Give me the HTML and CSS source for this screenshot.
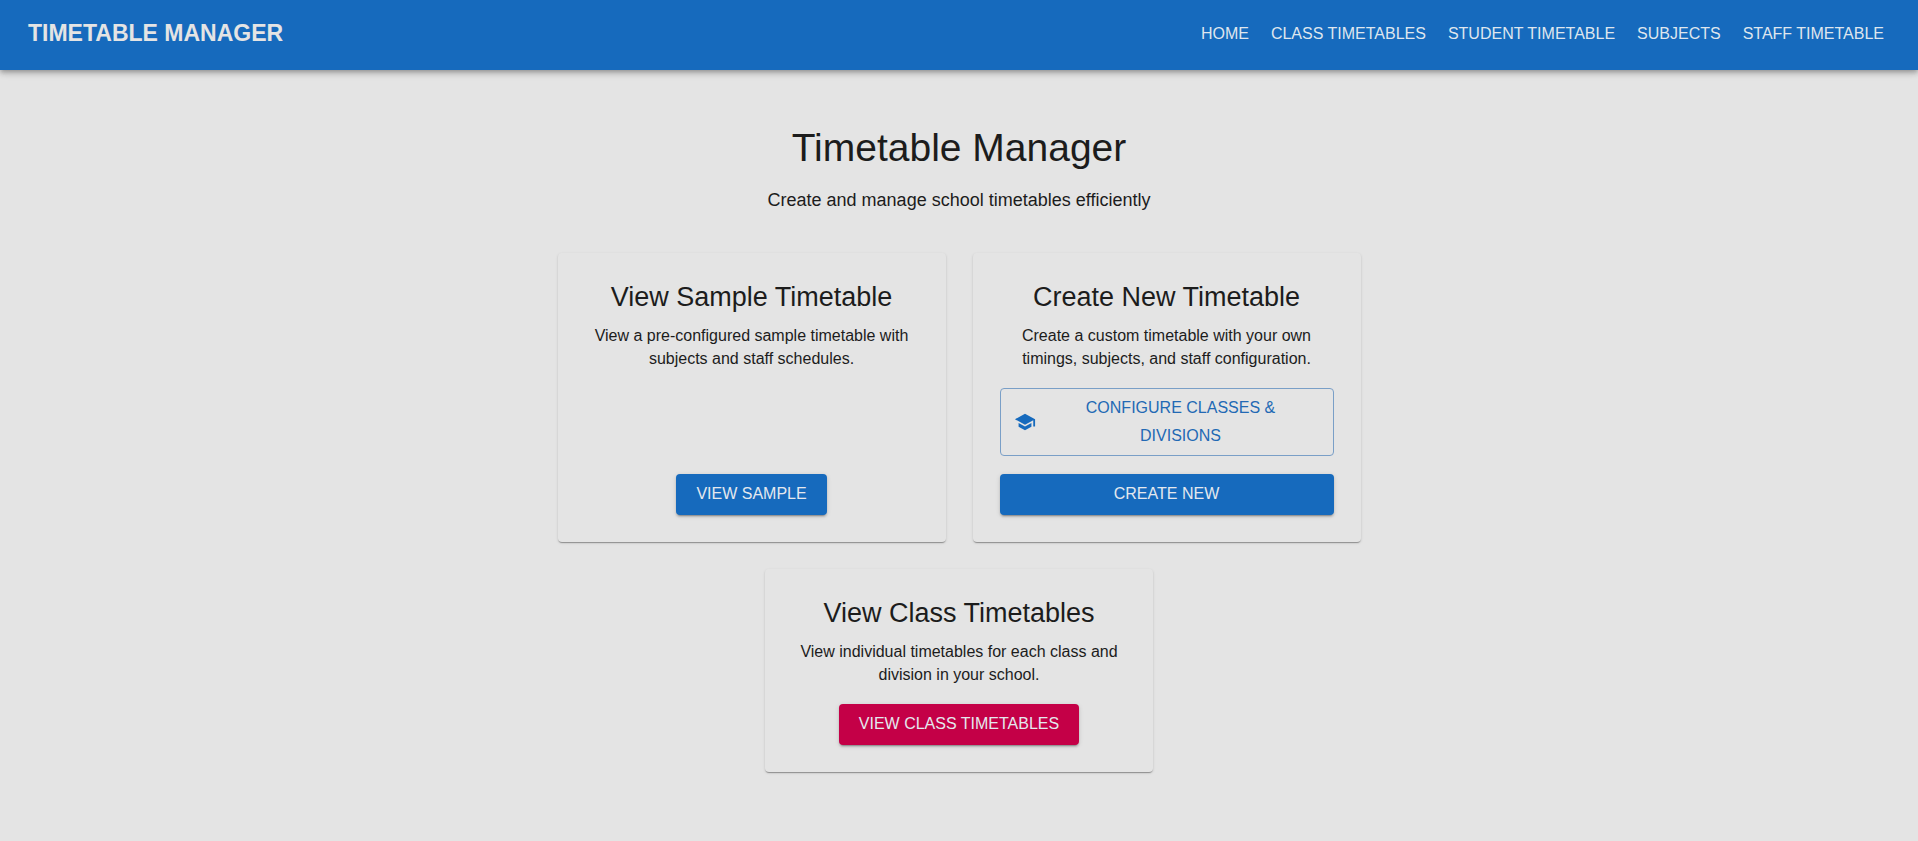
FILE: index.html
```html
<!DOCTYPE html>
<html lang="en">
<head>
<meta charset="utf-8">
<meta name="viewport" content="width=device-width, initial-scale=1">
<title>Timetable Manager</title>
<link rel="stylesheet" href="styles.css">
</head>
<body>
<header class="app-bar">
  <a class="brand" href="#">TIMETABLE MANAGER</a>
  <nav class="nav">
    <a class="nav-link" href="#">HOME</a>
    <a class="nav-link" href="#">CLASS TIMETABLES</a>
    <a class="nav-link" href="#">STUDENT TIMETABLE</a>
    <a class="nav-link" href="#">SUBJECTS</a>
    <a class="nav-link" href="#">STAFF TIMETABLE</a>
  </nav>
</header>
<main class="main">
  <h1 class="title">Timetable Manager</h1>
  <p class="subtitle">Create and manage school timetables efficiently</p>
  <div class="cards">
    <section class="card">
      <h2 class="card-title">View Sample Timetable</h2>
      <p class="card-text">View a pre-configured sample timetable with subjects and staff schedules.</p>
      <div class="actions">
        <button class="btn btn-primary" type="button">VIEW SAMPLE</button>
      </div>
    </section>
    <section class="card">
      <h2 class="card-title">Create New Timetable</h2>
      <p class="card-text">Create a custom timetable with your own timings, subjects, and staff configuration.</p>
      <div class="actions actions-full">
        <button class="btn btn-outlined" type="button">
          <svg class="btn-icon" viewBox="0 0 24 24" aria-hidden="true"><path fill="currentColor" d="M5 13.18v4L12 21l7-3.82v-4L12 17l-7-3.82zM12 3 1 9l11 6 9-4.91V17h2V9L12 3z"/></svg>
          <span class="btn-label">CONFIGURE CLASSES &amp; DIVISIONS</span>
        </button>
        <button class="btn btn-primary" type="button">CREATE NEW</button>
      </div>
    </section>
    <section class="card">
      <h2 class="card-title">View Class Timetables</h2>
      <p class="card-text">View individual timetables for each class and division in your school.</p>
      <div class="actions">
        <button class="btn btn-secondary" type="button">VIEW CLASS TIMETABLES</button>
      </div>
    </section>
  </div>
</main>
</body>
</html>
```
FILE: styles.css
```css
* {
  box-sizing: border-box;
}

body {
  margin: 0;
  min-height: 100vh;
  background: #e4e4e4;
  color: #1c1c1c;
  font-family: "Liberation Sans", Arial, sans-serif;
  font-size: 16px;
}

.app-bar {
  display: flex;
  align-items: center;
  justify-content: space-between;
  min-height: 70px;
  padding: 0 34px 4px 28px;
  background: #166abd;
  box-shadow: 0 2px 4px -1px rgba(0, 0, 0, 0.2), 0 4px 5px rgba(0, 0, 0, 0.14), 0 1px 10px rgba(0, 0, 0, 0.12);
}

.brand {
  color: #e4e4e4;
  font-size: 23px;
  font-weight: 700;
  line-height: 36px;
  text-decoration: none;
}

.nav {
  display: flex;
  gap: 22px;
  padding-top: 2px;
}

.nav-link {
  color: #dfe6ee;
  line-height: 28px;
  text-decoration: none;
}

.main {
  max-width: 804px;
  margin: 0 auto;
  padding: 55px 0;
  text-align: center;
}

.title {
  margin: 0;
  font-size: 39px;
  font-weight: 400;
  line-height: 46px;
}

.subtitle {
  margin: 16px 0 40px;
  font-size: 18px;
  line-height: 26px;
}

.cards {
  display: flex;
  flex-wrap: wrap;
  justify-content: center;
  gap: 27px;
}

.card {
  display: flex;
  flex-direction: column;
  flex: 0 1 388px;
  padding: 26px 27px 27px;
  border-radius: 4px;
  box-shadow: 0 2px 1px -1px rgba(0, 0, 0, 0.2), 0 1px 1px rgba(0, 0, 0, 0.14), 0 1px 3px rgba(0, 0, 0, 0.12);
}

.card-title {
  margin: 0 0 9px;
  font-size: 27px;
  font-weight: 400;
  line-height: 36px;
}

.card-text {
  margin: 0 0 18px;
  line-height: 23px;
}

.actions {
  display: flex;
  flex-direction: column;
  align-items: center;
  gap: 18px;
  margin-top: auto;
}

.actions-full {
  align-items: stretch;
}

.btn {
  display: flex;
  align-items: center;
  justify-content: center;
  padding: 6px 20px 7px;
  border: 0;
  border-radius: 4px;
  font: inherit;
  line-height: 28px;
  cursor: pointer;
}

.btn-primary,
.btn-secondary {
  color: #e4e8ee;
  box-shadow: 0 3px 1px -2px rgba(0, 0, 0, 0.2), 0 2px 2px rgba(0, 0, 0, 0.14), 0 1px 5px rgba(0, 0, 0, 0.12);
}

.btn-primary {
  background: #166abd;
}

.btn-secondary {
  background: #c40047;
}

.btn-outlined {
  padding: 5px 16px 5px 13px;
  border: 1px solid #7a9fc7;
  background: transparent;
  color: #2269b4;
}

.btn-icon {
  flex: none;
  width: 22px;
  height: 22px;
  margin-right: 9px;
  color: #166abd;
}

.btn-label {
  flex: 1;
  padding: 0 40px;
}
```
